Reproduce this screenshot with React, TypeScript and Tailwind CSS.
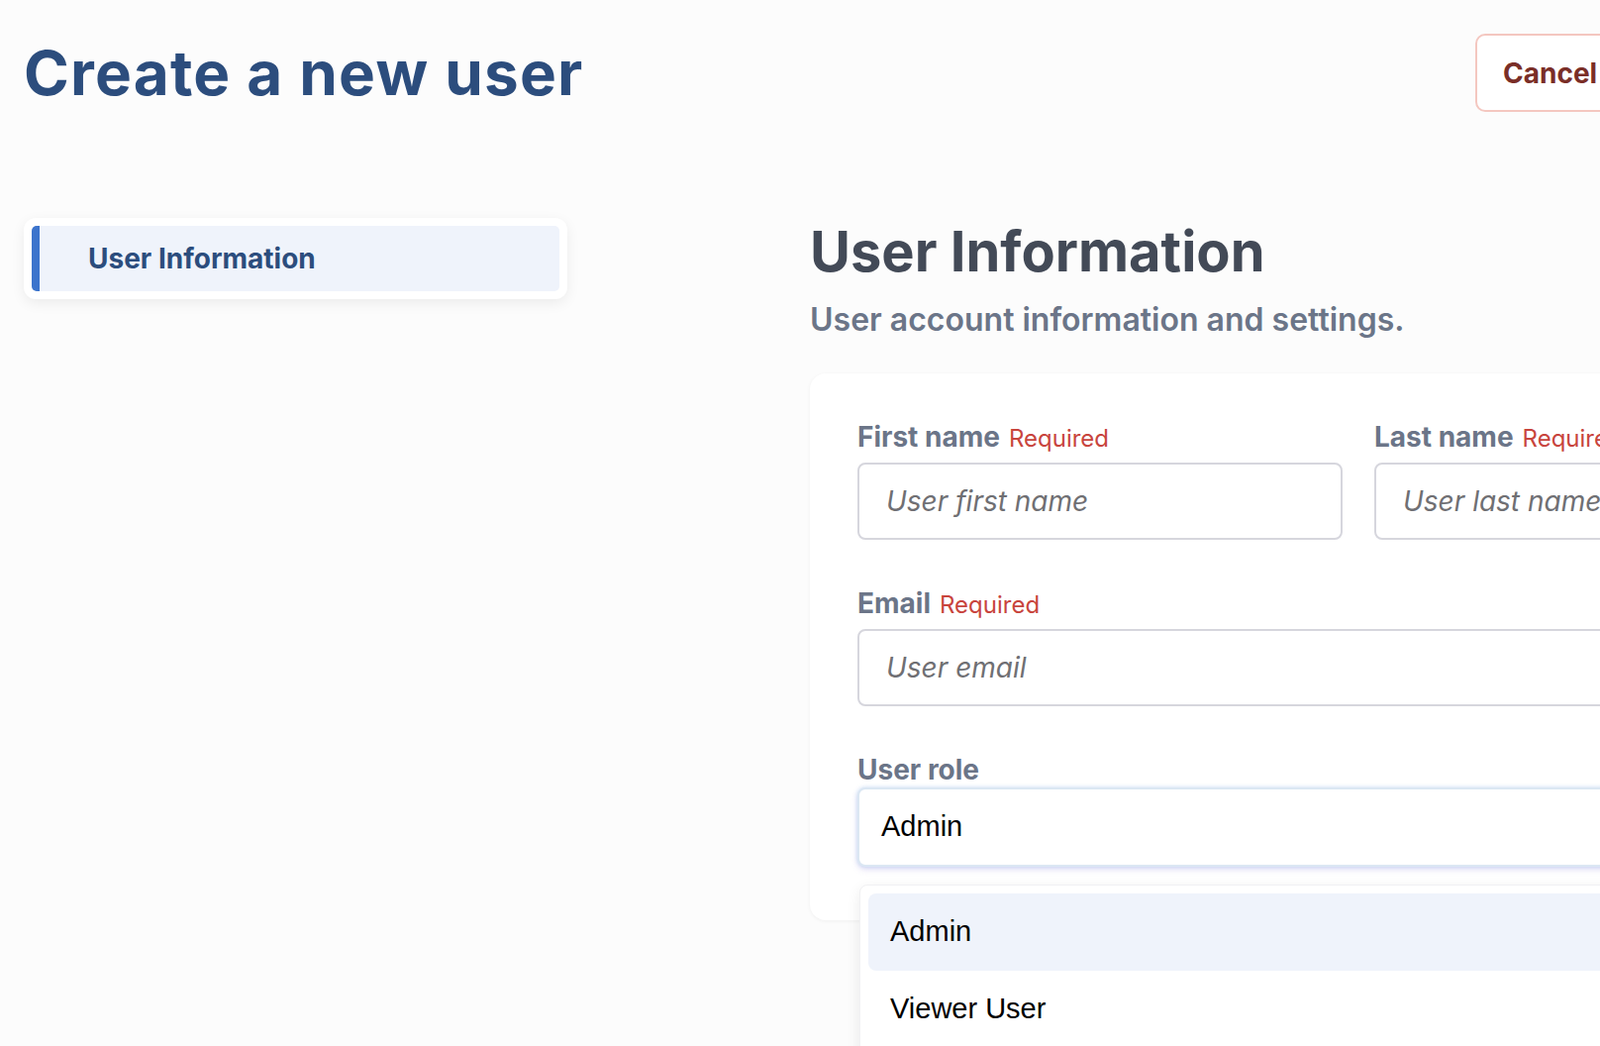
import { useState } from "react";

const inter = "font-['Inter','Noto_Sans',sans-serif]";

function Field({ label, placeholder, required = true }: { label: string; placeholder: string; required?: boolean }) {
  return (
    <label className="block">
      <span className="mb-[12px] flex items-baseline gap-[9px] leading-none">
        <span className="text-[28px] font-bold text-[#6b7588]">{label}</span>
        {required ? <span className="text-[24px] font-normal text-[#c8443d]">Required</span> : null}
      </span>
      <input
        placeholder={placeholder}
        className="h-[78px] w-full rounded-[8px] border-2 border-[#d6d6dd] bg-white px-[27px] text-[28px] italic text-[#333] outline-none placeholder:text-[#6f6f73]"
      />
    </label>
  );
}

export default function App() {
  const [role] = useState("Admin");
  const roles = ["Admin", "Viewer User"];

  return (
    <div className={`h-[1056px] w-[1616px] overflow-hidden bg-[#fcfcfc] ${inter}`}>
      <div className="w-[2000px] px-[24px] pt-[34px]">
        <header className="flex items-center">
          <h1 className="w-[1466px] shrink-0 text-[62px] font-bold leading-none tracking-[1.2px] text-[#2c4d7d]">Create a new user</h1>
          <button className="h-[79px] shrink-0 rounded-[10px] border-2 border-[#f4c7c0] bg-white px-[26px] text-[28px] font-bold text-[#7a2e27]">
            Cancel
          </button>
        </header>

        <div className="mt-[107px] flex">
          <nav className="w-[549px] shrink-0 self-start rounded-[12px] bg-white p-[8px] shadow-[0_4px_14px_rgba(0,0,0,0.07)]">
            <div className="flex h-[66px] items-center rounded-[5px] border-l-[8px] border-[#3c74cc] bg-[#eff3fb] pl-[49px] text-[28px] font-bold text-[#2c4d7d]">
              User Information
            </div>
          </nav>

          <main className="ml-[245px] w-[1108px] shrink-0 pt-[6px]">
            <h2 className="text-[56px] font-bold leading-none text-[#434a57]">User Information</h2>
            <p className="mt-[25px] text-[32px] font-semibold leading-none text-[#6b7588]">
              User account information and settings.
            </p>

            <section className="relative mt-[38px] rounded-[16px] bg-white px-[48px] pb-[54px] pt-[50px] shadow-[0_1px_4px_rgba(0,0,0,0.05)]">
              <div className="grid grid-cols-2 gap-x-[32px]">
                <Field label="First name" placeholder="User first name" />
                <Field label="Last name" placeholder="User last name" />
              </div>
              <div className="mt-[50px]">
                <Field label="Email" placeholder="User email" />
              </div>
              <div className="mt-[50px]">
                <div className="text-[28px] font-bold leading-none text-[#6b7588]">User role</div>
                <div className="relative mt-[4px]">
                  <div className="flex h-[80px] items-center rounded-[8px] border-2 border-[#dbe7f3] bg-white px-[22px] font-['Liberation_Sans',Arial,sans-serif] text-[29px] text-black shadow-[0_0_4px_rgba(110,170,225,0.35),0_3px_6px_rgba(135,115,215,0.22)]">
                    {role}
                  </div>
                  <ul className="absolute left-[2px] right-0 top-[98px] z-10 rounded-[8px] border border-[#f1f1f3] bg-white p-[8px] font-['Liberation_Sans',Arial,sans-serif] shadow-[0_4px_14px_rgba(0,0,0,0.08)]">
                    {roles.map((r) => (
                      <li
                        key={r}
                        className={`flex h-[78px] items-center rounded-[8px] px-[22px] text-[29px] text-black ${r === role ? "bg-[#eff3fb]" : ""}`}
                      >
                        {r}
                      </li>
                    ))}
                  </ul>
                </div>
              </div>
            </section>
          </main>
        </div>
      </div>
    </div>
  );
}
